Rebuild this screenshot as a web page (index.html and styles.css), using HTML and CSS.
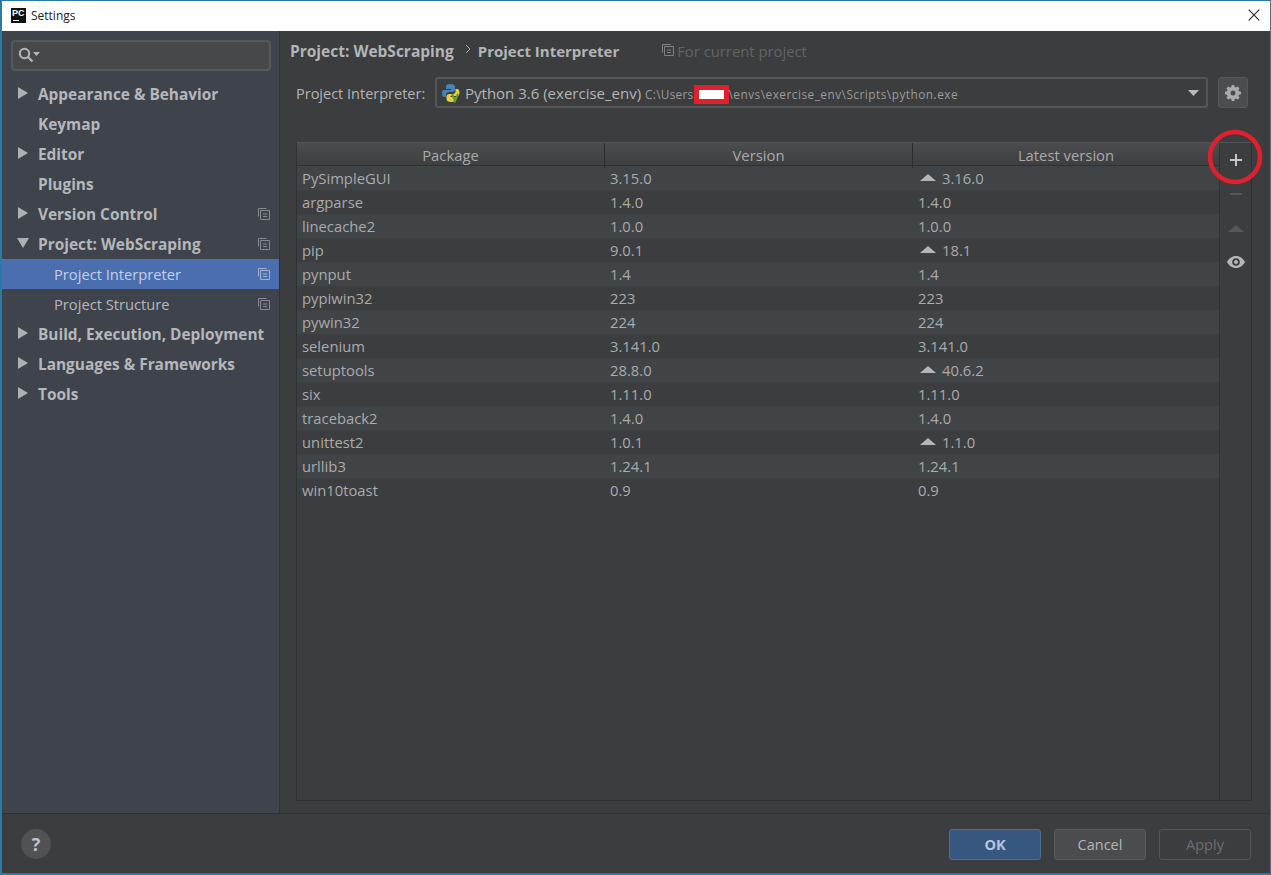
FILE: index.html
```html
<!DOCTYPE html>
<html lang="en">
<head>
<meta charset="utf-8">
<title>Settings</title>
<link rel="stylesheet" href="styles.css">
</head>
<body>
<svg class="defs" width="0" height="0" aria-hidden="true">
  <symbol id="copy" viewBox="0 0 12 12">
    <path d="M.5 8.5V.5h8" fill="none" stroke="currentColor"/>
    <path d="M2.5 2.5h9v9h-9z" fill="none" stroke="currentColor"/>
    <path d="M5 5.5h4v1H5zM5 8h4v1H5z" fill="currentColor"/>
  </symbol>
  <symbol id="right" viewBox="0 0 10 12"><path d="M0 0l10 6-10 6z" fill="currentColor"/></symbol>
  <symbol id="down" viewBox="0 0 12 10"><path d="M0 0h12l-6 10z" fill="currentColor"/></symbol>
  <symbol id="up" viewBox="0 0 16 7"><path d="M8 0l8 7H0z" fill="currentColor"/></symbol>
</svg>
<div class="window">
  <header class="titlebar">
    <div class="logo"><span class="logo-text">PC</span><i class="logo-line"></i></div>
    <span class="title">Settings</span>
    <svg class="close" width="12" height="12" viewBox="0 0 12 12"><path d="M.7.7l10.600 10.600M11.300.7L.7 11.300" stroke="#222" stroke-width="1.100" fill="none"/></svg>
  </header>
  <div class="main">
    <aside class="sidebar">
      <div class="search">
        <svg width="22" height="16" viewBox="0 0 22 16"><circle cx="6.500" cy="6.500" r="4.700" fill="none" stroke="#b4b6b8" stroke-width="2"/><path d="M10 10l4.500 4.500" stroke="#b4b6b8" stroke-width="2.200"/><path d="M15 5h7l-3.500 4z" fill="#b4b6b8"/></svg>
      </div>
      <nav class="tree">
        <div class="node"><svg class="arrow"><use href="#right"/></svg><b>Appearance &amp; Behavior</b></div>
        <div class="node leaf"><b>Keymap</b></div>
        <div class="node"><svg class="arrow"><use href="#right"/></svg><b>Editor</b></div>
        <div class="node leaf"><b>Plugins</b></div>
        <div class="node"><svg class="arrow"><use href="#right"/></svg><b>Version Control</b><svg class="copy"><use href="#copy"/></svg></div>
        <div class="node"><svg class="arrow open"><use href="#down"/></svg><b>Project: WebScraping</b><svg class="copy"><use href="#copy"/></svg></div>
        <div class="node child selected"><span>Project Interpreter</span><svg class="copy"><use href="#copy"/></svg></div>
        <div class="node child"><span>Project Structure</span><svg class="copy"><use href="#copy"/></svg></div>
        <div class="node"><svg class="arrow"><use href="#right"/></svg><b>Build, Execution, Deployment</b></div>
        <div class="node"><svg class="arrow"><use href="#right"/></svg><b>Languages &amp; Frameworks</b></div>
        <div class="node"><svg class="arrow"><use href="#right"/></svg><b>Tools</b></div>
      </nav>
    </aside>
    <section class="content">
      <div class="crumbs">
        <b>Project: WebScraping</b>
        <svg class="chev" width="6" height="10" viewBox="0 0 6 10"><path d="M1 1l4 4-4 4" fill="none" stroke="#aaa"/></svg>
        <b class="crumb-last">Project Interpreter</b>
        <span class="scope"><svg class="scope-icon"><use href="#copy"/></svg>For current project</span>
      </div>
      <div class="interp">
        <label class="interp-label">Project Interpreter:</label>
        <div class="combo">
          <svg class="py" width="20" height="20" viewBox="0 0 20 20">
            <path d="M9.500 1C6 1 5 2.300 5 4v2h5v1H3C1.500 7 1 9 1 10.500S1.800 14 3 14h2v-2.500C5 10 6.200 9 7.500 9h4c1.300 0 2.500-1 2.500-2.300V4c0-1.700-1.500-3-4.500-3z" fill="#4584b6"/>
            <path d="M10 19c3.500 0 4.500-1.300 4.500-3v-2h-5v-1h7c1.500 0 2-2 2-3.500S17.700 6 16.500 6h-2v2.500c0 1.500-1.200 2.500-2.500 2.500H8c-1.300 0-2.500 1-2.500 2.300V16c0 1.700 1.500 3 4.500 3z" fill="#e8cc45"/>
            <path d="M11 11l3 7 3-7" fill="none" stroke="#5da02e" stroke-width="2"/>
          </svg>
          <span class="py-name">Python 3.6 (exercise_env)</span>
          <span class="path">C:\Users<i class="mask"></i><span class="path-tail">\envs\exercise_env\Scripts\python.exe</span></span>
          <svg class="caret" width="11" height="6" viewBox="0 0 11 6"><path d="M0 0h11L5.500 6z" fill="#b8babc"/></svg>
        </div>
        <button class="gear" aria-label="Settings">
          <svg width="16" height="16" viewBox="0 0 16 16"><path fill="#a9abad" fill-rule="evenodd" d="M6.700 0h2.600l.4 2.100 1.200.5L12.700 1.400l1.900 1.900-1.200 1.800.5 1.200 2.100.4v2.600l-2.100.4-.5 1.200 1.200 1.800-1.900 1.900-1.800-1.200-1.200.5-.4 2.100H6.700l-.4-2.100-1.200-.5-1.800 1.200-1.900-1.900 1.200-1.800-.5-1.200L0 9.300V6.700l2.100-.4.500-1.200L1.400 3.300l1.900-1.900 1.800 1.200 1.200-.5zM8 5.500a2.500 2.500 0 1 0 0 5 2.500 2.500 0 0 0 0-5z"/></svg>
        </button>
      </div>
      <div class="panel">
        <div class="table">
          <div class="thead"><div>Package</div><div>Version</div><div>Latest version</div></div>
          <div class="row"><span>PySimpleGUI</span><span>3.15.0</span><span class="new"><svg class="up"><use href="#up"/></svg>3.16.0</span></div>
          <div class="row"><span>argparse</span><span>1.4.0</span><span>1.4.0</span></div>
          <div class="row"><span>linecache2</span><span>1.0.0</span><span>1.0.0</span></div>
          <div class="row"><span>pip</span><span>9.0.1</span><span class="new"><svg class="up"><use href="#up"/></svg>18.1</span></div>
          <div class="row"><span>pynput</span><span>1.4</span><span>1.4</span></div>
          <div class="row"><span>pypiwin32</span><span>223</span><span>223</span></div>
          <div class="row"><span>pywin32</span><span>224</span><span>224</span></div>
          <div class="row"><span>selenium</span><span>3.141.0</span><span>3.141.0</span></div>
          <div class="row"><span>setuptools</span><span>28.8.0</span><span class="new"><svg class="up"><use href="#up"/></svg>40.6.2</span></div>
          <div class="row"><span>six</span><span>1.11.0</span><span>1.11.0</span></div>
          <div class="row"><span>traceback2</span><span>1.4.0</span><span>1.4.0</span></div>
          <div class="row"><span>unittest2</span><span>1.0.1</span><span class="new"><svg class="up"><use href="#up"/></svg>1.1.0</span></div>
          <div class="row"><span>urllib3</span><span>1.24.1</span><span>1.24.1</span></div>
          <div class="row"><span>win10toast</span><span>0.9</span><span>0.9</span></div>
        </div>
        <div class="tools">
          <div class="tool"><svg width="14" height="14" viewBox="0 0 14 14"><path d="M7 1v12M1 7h12" stroke="#c4c6c8" stroke-width="2"/></svg></div>
          <div class="tool"><svg width="14" height="14" viewBox="0 0 14 14"><path d="M1 7h12" stroke="#55585a" stroke-width="2"/></svg></div>
          <div class="tool"><svg class="tool-up"><use href="#up"/></svg></div>
          <div class="tool"><svg width="18" height="12" viewBox="0 0 18 12"><path fill="#b4b6b8" fill-rule="evenodd" d="M9 0c4 0 7.200 2.600 9 6-1.800 3.400-5 6-9 6s-7.200-2.600-9-6c1.800-3.400 5-6 9-6zm0 2.200a3.800 3.800 0 1 0 0 7.600 3.800 3.800 0 0 0 0-7.600zM9 4a2 2 0 1 1 0 4 2 2 0 0 1 0-4z"/></svg></div>
        </div>
        <svg class="ring" width="56" height="56" viewBox="0 0 56 56"><circle cx="28" cy="28" r="25" fill="none" stroke="#e0202c" stroke-width="4.500"/></svg>
      </div>
    </section>
  </div>
  <footer class="footer">
    <div class="help">?</div>
    <div class="buttons">
      <button class="btn ok">OK</button>
      <button class="btn cancel">Cancel</button>
      <button class="btn apply">Apply</button>
    </div>
  </footer>
</div>
</body>
</html>
```
FILE: styles.css
```css
* { box-sizing: border-box; }
html, body { margin: 0; padding: 0; }
body { width: 1271px; height: 875px; overflow: hidden; font-family: "Open Sans", "Noto Sans", sans-serif; font-size: 14.500px; color: #b3b5b6; background: #3c3d3f; }
.defs { position: absolute; }
.window { width: 1271px; height: 875px; display: flex; flex-direction: column; border: 2px solid #2b7aa6; border-top-width: 1px; border-right-width: 1px; }
.titlebar { height: 30px; flex: none; background: #fff; display: flex; align-items: center; padding: 0 10px 2px 9px; color: #222; }
.logo { width: 15px; height: 15px; background: #0c1410; position: relative; margin-right: 5px; }
.logo-text { position: absolute; left: 1px; top: 0; font: bold 9px/10px "Liberation Sans", sans-serif; color: #fff; }
.logo-line { position: absolute; left: 2px; bottom: 2px; width: 6px; height: 1px; background: #fff; }
.title { font-size: 12px; }
.close { margin-left: auto; }
.main { flex: 1; min-height: 0; display: flex; }
.sidebar { width: 278px; flex: none; background: #3f444c; border-right: 1px solid #303234; padding: 9px 8px 0 0; }
.search { margin-left: 9px; width: 260px; height: 31px; background: #46484a; border: 2px solid #56585a; border-radius: 4px; padding: 5px 0 0 5px; }
.search svg { display: block; }
.tree { margin: 8px -8px 0 0; }
.node { height: 30px; display: flex; align-items: center; padding-left: 36px; position: relative; font-size: 15.400px; color: #b5b7ba; }
.node b { font-weight: 700; }
.node.child { padding-left: 52px; font-size: 14.700px; }
.node.selected { background: #4b6eaf; color: #c3cfe4; }
.arrow { position: absolute; left: 16px; top: 8px; width: 10px; height: 12px; color: #adb0b3; }
.arrow.open { width: 12px; height: 10px; left: 15px; top: 9px; }
.copy { position: absolute; left: 256px; top: 9px; width: 12px; height: 12px; color: #85888c; }
.selected .copy { color: #9fb0d0; }
.content { flex: 1; min-width: 0; padding: 0 18px 12px 16px; display: flex; flex-direction: column; }
.crumbs { height: 40px; margin: 0 0 6px -6px; flex: none; display: flex; align-items: center; font-size: 15.500px; white-space: nowrap; }
.crumbs b { font-weight: 700; }
.crumbs .crumb-last { font-size: 15px; }
.chev { margin: 0 7px 4px 11px; }
.scope { display: flex; align-items: center; margin-left: 43px; color: #626466; font-size: 14.800px; }
.scope-icon { width: 12px; height: 12px; margin-right: 3px; color: #808284; margin-bottom: 3px; }
.interp { height: 31px; flex: none; display: flex; align-items: flex-start; }
.interp-label { width: 139px; flex: none; font-size: 14.500px; line-height: 34px; }
.combo { width: 773px; height: 31px; flex: none; border: 2px solid #545658; border-radius: 3px; background: #3c3d3f; display: flex; align-items: center; padding: 1px 0 0 4px; position: relative; white-space: nowrap; }
.py { flex: none; margin-right: 4px; }
.py-name { font-size: 15px; margin-right: 4px; }
.path { font-size: 11.800px; color: #9a9c9e; letter-spacing: .28px; position: relative; top: 1px; }
.path-tail { letter-spacing: .5px; }
.mask { display: inline-block; width: 35px; height: 19px; margin: 0; vertical-align: -5px; background: #fff; border-style: solid; border-color: #e0202c; border-width: 5px; }
.caret { position: absolute; right: 7px; top: 11px; }
.gear { width: 30px; height: 31px; margin-left: 10px; flex: none; padding: 0; background: #4b4e50; border: 1px solid #55585a; border-radius: 3px; display: flex; align-items: center; justify-content: center; }
.panel { flex: 1; min-height: 0; margin-top: 34px; border: 1px solid #2f3132; display: flex; position: relative; border-top-color: #515355; }
.table { flex: 1; min-width: 0; }
.thead { height: 23px; display: grid; grid-template-columns: 308px 308px 1fr; background: linear-gradient(#4a4c4e, #3d3f41); border-bottom: 1px solid #2f3132; color: #a8aaac; font-size: 14.800px; line-height: 25px; text-align: center; }
.thead div { border-right: 1px solid #2a2c2d; white-space: nowrap; }
.thead div:last-child { border-right: 0; }
.row { height: 24px; display: grid; grid-template-columns: 308px 308px 1fr; align-items: center; font-size: 14.800px; color: #a9abad; }
.row:nth-child(even) { background: #404446; }
.row span { padding-left: 5px; white-space: nowrap; }
.new { display: flex; align-items: center; }
.up { width: 16px; height: 7px; margin: 0 6px 0 2px; color: #b4b6b8; position: relative; top: -1px; }
.tools { width: 32px; flex: none; border-left: 1px solid #303234; }
.tool { height: 34px; display: flex; align-items: center; justify-content: center; }
.tool-up { width: 16px; height: 7px; color: #55585a; }
.ring { position: absolute; right: -12px; top: -14px; }
.footer { height: 60px; flex: none; border-top: 1px solid #303234; background: #3c3d3f; display: flex; align-items: flex-start; justify-content: space-between; padding: 15px 19px 0 19px; }
.help { width: 30px; height: 30px; border-radius: 50%; background: #505254; color: #c0c2c4; font: 700 18px/30px "Open Sans", sans-serif; text-align: center; }
.buttons { display: flex; gap: 13px; }
.btn { width: 92px; height: 31px; padding: 0 0 1px; border-radius: 3px; font: 14.500px "Open Sans", sans-serif; }
.ok { background: #365880; border: 1px solid #4c708c; color: #b4c6da; font-weight: 700; }
.cancel { background: #4a4c4e; border: 1px solid #5a5c5e; color: #b3b5b6; }
.apply { background: #3c3d3f; border: 1px solid #55585a; color: #6c6e70; }
```
